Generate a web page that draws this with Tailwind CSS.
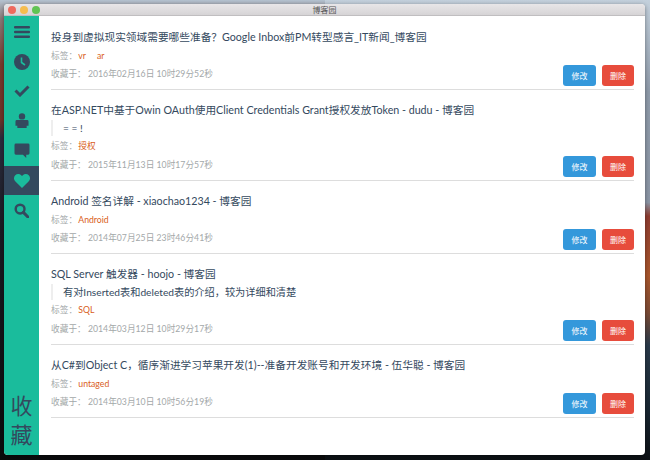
<!DOCTYPE html>
<html lang="en">
<head>
  <meta charset="utf-8" />
  <title>博客园</title>
  <script src="https://cdn.jsdelivr.net/npm/@tailwindcss/browser@4"></script>
</head>
<body class="w-[650px] h-[460px] overflow-hidden bg-[linear-gradient(180deg,#b4c2d0_0%,#8a7a78_4%,#7a3a2c_14%,#6e3328_26%,#2b2c3e_30%,#1a1a22_50%,#0a0b0c_100%)] font-['Lato','Noto_Sans_CJK_SC',sans-serif]">
  <div class="relative h-[460px]">
    <!-- Right part of the wallpaper -->
    <div class="absolute right-0 top-0 w-[325px] h-[460px] bg-[linear-gradient(180deg,#c3d0dc_0%,#8e9aa9_20%,#8a94a4_44%,#8e3c30_47%,#a8562c_60%,#7a4a35_68%,#2a3a4a_75%,#1a2834_88%,#0c1014_100%)]"></div>

    <!-- Window -->
    <div class="relative pt-[4px] pl-[4px] pr-[5px] pb-[5px] h-[460px]">
      <div class="h-full flex flex-col rounded-[4px] overflow-hidden bg-white shadow-[0_1px_4px_rgba(0,0,0,0.4)]">
        <!-- Title bar -->
        <div class="relative h-[12px] shrink-0 bg-[linear-gradient(180deg,#e8e6e8,#d6d4d6)] border-b border-[#c0bec0] flex items-center justify-center">
          <div class="absolute left-[4px] top-[2px] flex gap-[4px]">
            <span class="w-[8px] h-[8px] rounded-full bg-[#ee6a5e]"></span>
            <span class="w-[8px] h-[8px] rounded-full bg-[#f5bd4f]"></span>
            <span class="w-[8px] h-[8px] rounded-full bg-[#61c454]"></span>
          </div>
          <span class="text-[8px] leading-none text-[#555]">博客园</span>
        </div>

        <div class="flex-1 flex min-h-0">
          <!-- Sidebar -->
          <nav class="w-[35px] shrink-0 bg-[#1abc9c] flex flex-col">
            <div class="h-[31px] flex items-center justify-center">
              <svg width="16" height="12" viewBox="0 0 16 12" fill="#34495e"><rect y="0" width="16" height="2.6" rx="1"/><rect y="4.7" width="16" height="2.6" rx="1"/><rect y="9.4" width="16" height="2.6" rx="1"/></svg>
            </div>
            <div class="h-[29px] flex items-center justify-center">
              <svg width="16" height="16" viewBox="0 0 16 16"><circle cx="8" cy="8" r="8" fill="#34495e"/><path d="M7.5 3.5V8.5L11 11" fill="none" stroke="#1abc9c" stroke-width="1.6"/></svg>
            </div>
            <div class="h-[30px] flex items-center justify-center">
              <svg width="16" height="12" viewBox="0 0 16 12"><path d="M1.5 5.5L6 10L14.5 1.5" fill="none" stroke="#34495e" stroke-width="3"/></svg>
            </div>
            <div class="h-[29px] flex items-center justify-center">
              <svg width="14" height="15" viewBox="0 0 15 16" fill="#34495e"><circle cx="7.5" cy="3.6" r="3.4"/><path d="M2 7.5h11a1.5 1.5 0 0 1 1.5 1.5v4.5H12.5V16h-10v-2.5H.5V9A1.5 1.5 0 0 1 2 7.5z"/></svg>
            </div>
            <div class="h-[31px] flex items-center justify-center">
              <svg width="16" height="15" viewBox="0 0 16 16" fill="#34495e"><path d="M1.5 0.5h13A1.5 1.5 0 0 1 16 2v9a1.5 1.5 0 0 1-1.5 1.5H12.5V16L9 12.5H1.5A1.5 1.5 0 0 1 0 11V2A1.5 1.5 0 0 1 1.5 0.5z"/></svg>
            </div>
            <div class="h-[29px] flex items-center justify-center bg-[#34495e]">
              <svg width="16" height="14" viewBox="0 0 16 14" fill="#1abc9c"><path d="M8 14L1.2 7.2A4.2 4.2 0 0 1 7.2 1.3L8 2.1L8.8 1.3A4.2 4.2 0 0 1 14.8 7.2z"/></svg>
            </div>
            <div class="h-[30px] flex items-center justify-center">
              <svg width="15" height="15" viewBox="0 0 16 16"><circle cx="6.5" cy="6.5" r="4.7" fill="none" stroke="#34495e" stroke-width="2.6"/><path d="M10 10L15 15" stroke="#34495e" stroke-width="3.2" stroke-linecap="round"/></svg>
            </div>
            <div class="mt-auto pb-[6px] text-[22px] leading-[29px] text-center text-[#34495e]">收<br />藏</div>
          </nav>

          <!-- List -->
          <main class="flex-1 pt-[1px] pl-[12px] pr-[11px]">
            <article class="h-[73px] border-b border-[#dddddd] flex flex-col">
              <h2 class="mt-[12px] text-[10.7px] leading-[16px] text-[#34495e]">投身到虚拟现实领域需要哪些准备？Google Inbox前PM转型感言_IT新闻_博客园</h2>
              <p class="mt-[5px] text-[8.7px] leading-[12px] text-[#a3a8a9]">标签： <span class="-ml-[1px] text-[#d9601a]">vr</span><span class="ml-[11px] text-[#d9601a]">ar</span></p>
              <div class="mt-auto flex justify-between items-end">
                <p class="mb-[9px] text-[8.7px] leading-[12px] text-[#a3a8a9]">收藏于： 2016年02月16日 10时29分52秒</p>
                <div class="flex gap-[6px] mb-[3px]">
                  <button class="w-[33px] h-[21px] rounded-[3px] bg-[#3498db] text-white text-[8px]">修改</button>
                  <button class="w-[32px] h-[21px] rounded-[3px] bg-[#e74c3c] text-white text-[8px]">删除</button>
                </div>
              </div>
            </article>

            <article class="h-[91px] border-b border-[#dddddd] flex flex-col">
              <h2 class="mt-[12px] text-[10.7px] leading-[16px] text-[#34495e]">在ASP.NET中基于Owin OAuth使用Client Credentials Grant授权发放Token - dudu - 博客园</h2>
              <blockquote class="mt-[2px] h-[16px] border-l-[2px] border-[#eeeeee] pl-[10px] text-[10.2px] leading-[16px] text-[#34495e]">= = !</blockquote>
              <p class="mt-[4px] text-[8.7px] leading-[12px] text-[#a3a8a9]">标签： <span class="-ml-[1px] text-[#d9601a]">授权</span></p>
              <div class="mt-auto flex justify-between items-end">
                <p class="mb-[9px] text-[8.7px] leading-[12px] text-[#a3a8a9]">收藏于： 2015年11月13日 10时17分57秒</p>
                <div class="flex gap-[6px] mb-[3px]">
                  <button class="w-[33px] h-[21px] rounded-[3px] bg-[#3498db] text-white text-[8px]">修改</button>
                  <button class="w-[32px] h-[21px] rounded-[3px] bg-[#e74c3c] text-white text-[8px]">删除</button>
                </div>
              </div>
            </article>

            <article class="h-[73px] border-b border-[#dddddd] flex flex-col">
              <h2 class="mt-[12px] text-[10.7px] leading-[16px] text-[#34495e]">Android 签名详解 - xiaochao1234 - 博客园</h2>
              <p class="mt-[5px] text-[8.7px] leading-[12px] text-[#a3a8a9]">标签： <span class="-ml-[1px] text-[#d9601a]">Android</span></p>
              <div class="mt-auto flex justify-between items-end">
                <p class="mb-[9px] text-[8.7px] leading-[12px] text-[#a3a8a9]">收藏于： 2014年07月25日 23时46分41秒</p>
                <div class="flex gap-[6px] mb-[3px]">
                  <button class="w-[33px] h-[21px] rounded-[3px] bg-[#3498db] text-white text-[8px]">修改</button>
                  <button class="w-[32px] h-[21px] rounded-[3px] bg-[#e74c3c] text-white text-[8px]">删除</button>
                </div>
              </div>
            </article>

            <article class="h-[91px] border-b border-[#dddddd] flex flex-col">
              <h2 class="mt-[12px] text-[10.7px] leading-[16px] text-[#34495e]">SQL Server 触发器 - hoojo - 博客园</h2>
              <blockquote class="mt-[2px] h-[16px] border-l-[2px] border-[#eeeeee] pl-[10px] text-[10.2px] leading-[16px] text-[#34495e]">有对Inserted表和deleted表的介绍，较为详细和清楚</blockquote>
              <p class="mt-[4px] text-[8.7px] leading-[12px] text-[#a3a8a9]">标签： <span class="-ml-[1px] text-[#d9601a]">SQL</span></p>
              <div class="mt-auto flex justify-between items-end">
                <p class="mb-[9px] text-[8.7px] leading-[12px] text-[#a3a8a9]">收藏于： 2014年03月12日 10时29分17秒</p>
                <div class="flex gap-[6px] mb-[3px]">
                  <button class="w-[33px] h-[21px] rounded-[3px] bg-[#3498db] text-white text-[8px]">修改</button>
                  <button class="w-[32px] h-[21px] rounded-[3px] bg-[#e74c3c] text-white text-[8px]">删除</button>
                </div>
              </div>
            </article>

            <article class="h-[73px] border-b border-[#dddddd] flex flex-col">
              <h2 class="mt-[12px] text-[10.7px] leading-[16px] text-[#34495e]">从C#到Object C，循序渐进学习苹果开发(1)--准备开发账号和开发环境 - 伍华聪 - 博客园</h2>
              <p class="mt-[5px] text-[8.7px] leading-[12px] text-[#a3a8a9]">标签： <span class="-ml-[1px] text-[#d9601a]">untaged</span></p>
              <div class="mt-auto flex justify-between items-end">
                <p class="mb-[9px] text-[8.7px] leading-[12px] text-[#a3a8a9]">收藏于： 2014年03月10日 10时56分19秒</p>
                <div class="flex gap-[6px] mb-[3px]">
                  <button class="w-[33px] h-[21px] rounded-[3px] bg-[#3498db] text-white text-[8px]">修改</button>
                  <button class="w-[32px] h-[21px] rounded-[3px] bg-[#e74c3c] text-white text-[8px]">删除</button>
                </div>
              </div>
            </article>
          </main>
        </div>
      </div>
    </div>
  </div>
</body>
</html>
